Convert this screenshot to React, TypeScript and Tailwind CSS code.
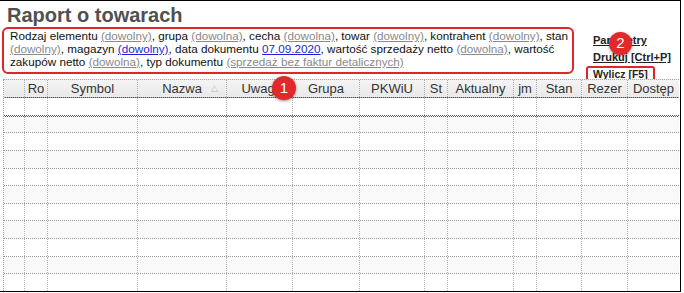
import React from 'react'

const cols = [
  { w: 21, label: '' },
  { w: 23, label: 'Ro' },
  { w: 90, label: 'Symbol' },
  { w: 89, label: 'Nazwa', sort: true },
  { w: 66, label: 'Uwagi' },
  { w: 67, label: 'Grupa' },
  { w: 65, label: 'PKWiU' },
  { w: 23, label: 'St' },
  { w: 66, label: 'Aktualny' },
  { w: 23, label: 'jm' },
  { w: 45, label: 'Stan' },
  { w: 46, label: 'Rezer' },
  { w: 52, label: 'Dostęp' },
]

const Gray = ({ children }: { children: React.ReactNode }) => (
  <span className="text-[#8a8a8a] underline">{children}</span>
)
const Blue = ({ children }: { children: React.ReactNode }) => (
  <span className="text-[#1f1fe0] underline">{children}</span>
)

const Badge = ({ n, className }: { n: string; className: string }) => (
  <div
    className={
      'absolute flex items-center justify-center rounded-full bg-[#e3282b] text-white text-[15px] shadow-[0_1px_3px_rgba(0,0,0,0.45)] ' +
      className
    }
  >
    {n}
  </div>
)

const App = () => {
  const rows = Array.from({ length: 11 }, (_, i) => i)

  return (
    <div className="relative w-[684px] h-[293px] bg-white overflow-hidden font-['Liberation_Sans',Arial,sans-serif]">
      <div className="w-[681px] h-[292px] border-t border-r border-b border-black flex flex-col">
        {/* Title */}
        <div className="pl-[7px] pt-[3px] h-[26px] text-[20px] leading-[22px] font-bold text-[#505050]">
          Raport o towarach
        </div>

        {/* Filters + actions */}
        <div className="flex h-[52px]">
          <div className="ml-[2px] w-[572px] h-[47px] border-2 border-[#e0262b] rounded-md pl-[6px] pr-[2px] text-[11.7px] leading-[13px] text-[#111]">
            Rodzaj elementu <Gray>(dowolny)</Gray>, grupa <Gray>(dowolna)</Gray>, cecha <Gray>(dowolna)</Gray>, towar{' '}
            <Gray>(dowolny)</Gray>, kontrahent <Gray>(dowolny)</Gray>, stan <Gray>(dowolny)</Gray>, magazyn{' '}
            <Blue>(dowolny)</Blue>, data dokumentu <Blue>07.09.2020</Blue>, wartość sprzedaży netto{' '}
            <Gray>(dowolna)</Gray>, wartość zakupów netto <Gray>(dowolna)</Gray>, typ dokumentu{' '}
            <Gray>(sprzedaż bez faktur detalicznych)</Gray>
          </div>
          <div className="ml-[12px] flex flex-col items-start pt-[5px] text-[11px] leading-[17px] font-bold text-[#222] whitespace-nowrap">
            <span className="pl-[7px] underline">Parametry</span>
            <span className="pl-[7px] underline">Drukuj [Ctrl+P]</span>
            <span className="h-[17px] border-2 border-[#e0262b] rounded-[3px] px-[5px] text-[10.5px] leading-[13px] underline">
              Wylicz [F5]
            </span>
          </div>
        </div>

        {/* Grid */}
        <div className="ml-[3px] w-[676px] flex-1 border-l border-dotted border-[#999] overflow-hidden">
          <div className="flex h-[19px] border-t border-b border-dotted border-[#aaa] bg-gradient-to-b from-[#f4f4f4] to-[#e9e9e9]">
            {cols.map((c, i) => (
              <div
                key={i}
                style={{ width: c.w }}
                className="relative shrink-0 h-full border-r border-dotted border-[#aaa] flex items-center justify-center text-[13px] text-[#333]"
              >
                {c.label}
                {c.sort && <span className="absolute right-[8px] top-[2px] text-[9px] text-[#bbb]">△</span>}
              </div>
            ))}
          </div>
          {rows.map((r) => (
            <div
              key={r}
              className={
                'flex h-[17.63px] border-b border-dotted ' +
                (r === 0 ? 'border-[#555] outline outline-1 outline-dotted outline-[#555] ' : 'border-[#999] ') +
                (r % 2 === 1 ? 'bg-[#f9f9f9]' : 'bg-white')
              }
            >
              {cols.map((c, i) => (
                <div
                  key={i}
                  style={{ width: c.w }}
                  className="shrink-0 h-full border-r border-dotted border-[#b5b5b5]"
                />
              ))}
            </div>
          ))}
        </div>
      </div>

      <Badge n="1" className="left-[272px] top-[76px] w-[24px] h-[24px]" />
      <Badge n="2" className="left-[609px] top-[32px] w-[23px] h-[23px]" />
    </div>
  )
}

export default App
